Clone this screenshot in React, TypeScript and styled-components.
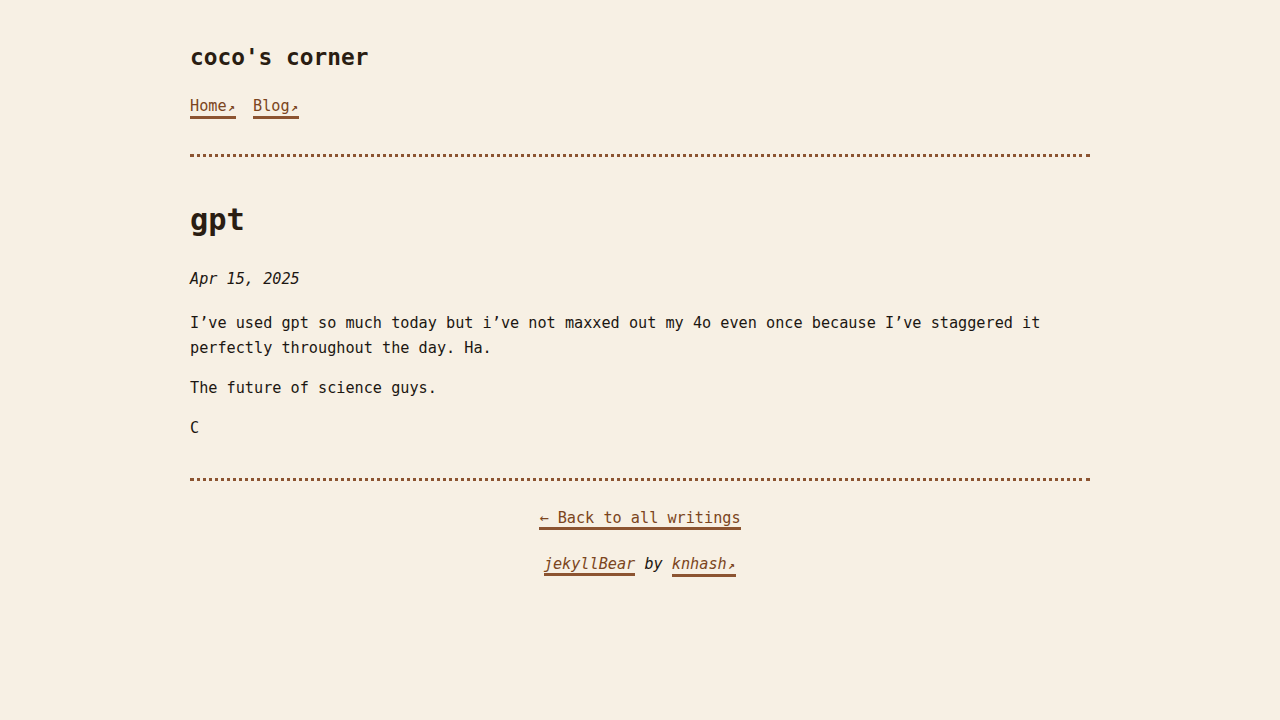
import React from "react";
import styled, { createGlobalStyle } from "styled-components";

const Global = createGlobalStyle`
  html, body { margin: 0; padding: 0; }
  body {
    background: #f7f0e4;
    color: #1c1712;
    font-family: "DejaVu Sans Mono", "Liberation Mono", monospace;
    font-size: 15.2px;
    line-height: 25px;
  }
`;

const Page = styled.div`
  width: 900px;
  margin: 0 auto;
  padding-top: 41px;
`;

const Header = styled.header`
  display: flex;
  flex-direction: column;
  gap: 24px;
`;

const SiteTitle = styled.h2`
  margin: 0;
  font-size: 22.8px;
  line-height: 32px;
  font-weight: 700;
  color: #2a1d12;
`;

const Nav = styled.nav`
  display: flex;
  gap: 17px;
`;

const Link = styled.a<{ $italic?: boolean }>`
  display: inline-block;
  line-height: 18px;
  color: #7b4520;
  text-decoration: none;
  border-bottom: 3px solid #8c5431;
  font-style: ${(p) => (p.$italic ? "italic" : "normal")};
`;

const Ext = styled.span`
  font-size: 0.75em;
  font-weight: 700;
  display: inline-block;
  width: 9.5px;
  text-align: center;
  font-style: normal;
`;

const Rule = styled.hr<{ $top: number; $bottom: number }>`
  border: none;
  border-top: 3px dotted #8c5431;
  margin: ${(p) => `${p.$top}px 0 ${p.$bottom}px`};
  height: 0;
`;

const Main = styled.main`
  display: flex;
  flex-direction: column;
`;

const PostTitle = styled.h1`
  margin: 0;
  font-size: 30.4px;
  line-height: 40px;
  font-weight: 700;
  color: #2a1d12;
`;

const DateLine = styled.p`
  margin: 27px 0 0;
  font-style: italic;
`;

const Body = styled.div`
  margin-top: 19px;
  display: flex;
  flex-direction: column;
  gap: 15px;
  p { margin: 0; }
`;

const Footer = styled.footer`
  display: flex;
  flex-direction: column;
  align-items: center;
  gap: 24px;
`;

const Credit = styled.p`
  margin: 0;
  line-height: 20px;
  font-style: italic;
`;

export default function App() {
  return (
    <>
      <Global />
      <Page>
        <Header>
          <SiteTitle>coco's corner</SiteTitle>
          <Nav>
            <Link href="#">Home<Ext>↗</Ext></Link>
            <Link href="#">Blog<Ext>↗</Ext></Link>
          </Nav>
        </Header>
        <Rule $top={35} $bottom={43} />
        <Main>
          <PostTitle>gpt</PostTitle>
          <DateLine>Apr 15, 2025</DateLine>
          <Body>
            <p>
              I’ve used gpt so much today but i’ve not maxxed out my 4o even once because I’ve staggered it
              perfectly throughout the day. Ha.
            </p>
            <p>The future of science guys.</p>
            <p>C</p>
          </Body>
        </Main>
        <Rule $top={37} $bottom={28} />
        <Footer>
          <Link href="#">← Back to all writings</Link>
          <Credit>
            <Link href="#" $italic>jekyllBear</Link> by <Link href="#" $italic>knhash<Ext>↗</Ext></Link>
          </Credit>
        </Footer>
      </Page>
    </>
  );
}
